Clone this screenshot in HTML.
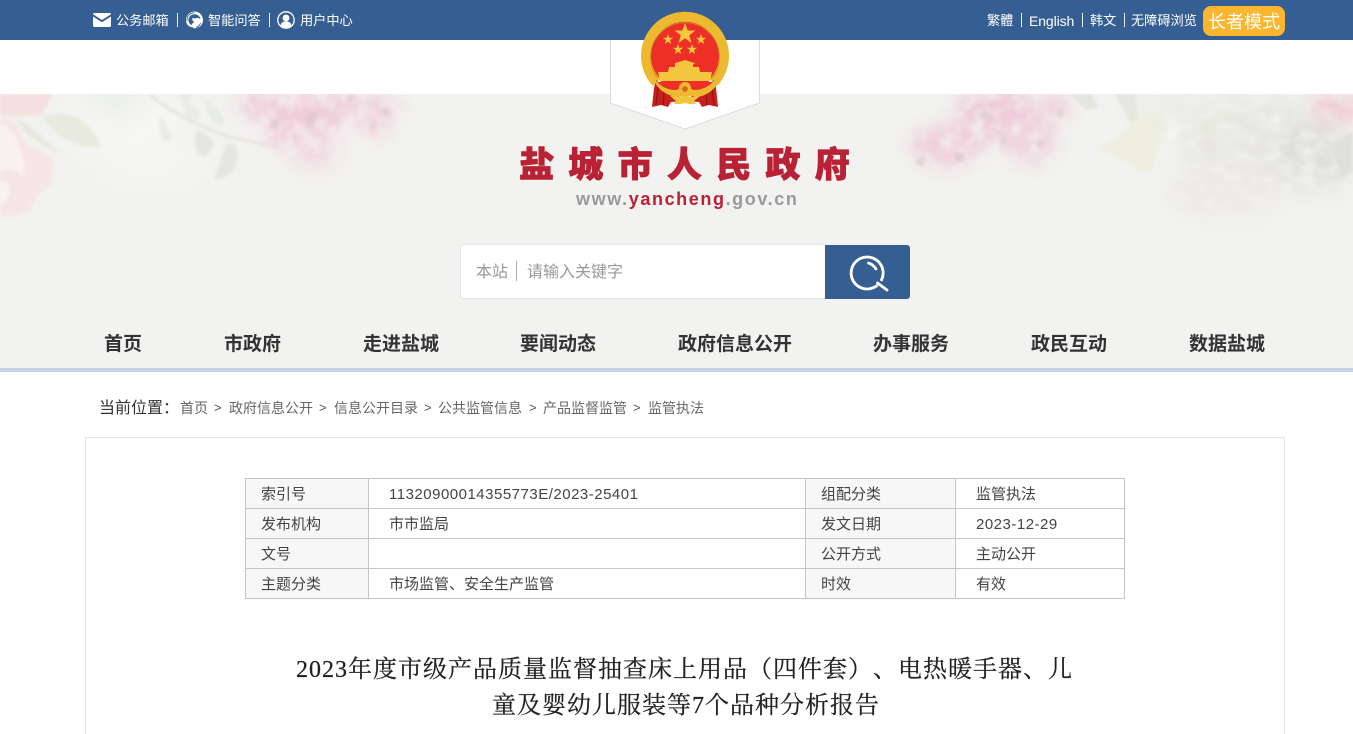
<!DOCTYPE html>
<html lang="zh-CN"><head><meta charset="utf-8"><title>盐城市人民政府</title>
<style>
*{margin:0;padding:0;box-sizing:border-box}
html,body{width:1353px;height:734px;overflow:hidden;background:#fff}
body{position:relative;font-family:"Liberation Sans","Noto Sans CJK SC",sans-serif;color:#333}
.a{position:absolute;white-space:nowrap}
.top{left:0;top:0;width:1353px;height:40px;background:#355f92}
.t{color:#fff;font-size:13.200px;line-height:20px;top:10.500px}
.sep{width:1px;height:14px;background:#e8edf3;top:13px}
.n{font-size:19px;font-weight:700;line-height:28px;top:331px;color:#333}
.c{font-size:14px;line-height:18px;top:399px;color:#666}
.g{font-size:13px;line-height:18px;top:399px;color:#555}
table{position:absolute;left:245px;top:478px;width:879px;height:121px;border-collapse:collapse;table-layout:fixed;font-size:15px;color:#444}
td{border:1px solid #c4c4c4;height:30px;line-height:27px;white-space:nowrap;padding:2px 0 0}
td.l{background:#f7f7f7;padding-left:15px}
td.v{padding-left:20px}
td.i{padding-left:20px;letter-spacing:.5px}
.ti{font-family:"Liberation Serif","Noto Serif CJK SC",serif;font-size:24px;line-height:36px;letter-spacing:1px;color:#222;left:296px;text-spacing-trim:space-all;-webkit-text-stroke:.25px #222}
</style></head><body>
<div class="a top"></div>

<!-- top left -->
<svg class="a" style="left:93px;top:13px" width="18" height="14" viewBox="0 0 18 14"><path fill="#fff" d="M1.500 0h15c.8 0 1.500.6 1.500 1.300L9 7 0 1.300C0 .6.7 0 1.500 0zM0 3.500 9 9.200l9-5.700V12.500c0 .8-.7 1.500-1.500 1.500h-15C.7 14 0 13.300 0 12.500z"/></svg>
<div class="a t" style="left:116px">公务邮箱</div>
<div class="a sep" style="left:177px"></div>
<svg class="a" style="left:185px;top:11px" width="19" height="19" viewBox="0 0 19 19"><path fill="#fff" d="M9.500.5C14 .5 18 4 18 9c0 3-1.500 5.500-3.800 7l-2.500.5c-.6 1.200-3.700 1.200-4-.2C3.500 16 1 13 1 9 1 4 5 .5 9.500.5z"/><path fill="#355f92" d="M3.500 10.500C3 6 6 3.300 9.500 3.300c3 0 5.300 1.900 6 4.700l-2.700-1.200c-2 .7-4 .7-5.500.2-.3 1.700.4 3.300 2 4.300-1.300.6-2.500 1.500-3 3-1.300-.9-2-2.300-2.800-3.800z"/><path fill="none" stroke="#355f92" stroke-width=".9" d="M2 10c-.3-5 3-8.300 7.500-8.300M15.500 12c-.6 2-2 3.500-4 4.200"/></svg>
<div class="a t" style="left:208px">智能问答</div>
<div class="a sep" style="left:269px"></div>
<svg class="a" style="left:277px;top:11px" width="18" height="18" viewBox="0 0 18 18"><circle cx="9" cy="9" r="8.200" fill="none" stroke="#fff" stroke-width="1.300"/><circle cx="9" cy="7" r="3.400" fill="#fff"/><path fill="#fff" d="M3.500 14.200c.6-2.600 2.800-3.800 5.500-3.800s4.900 1.200 5.500 3.800C13 15.700 11 16.500 9 16.500s-4-.8-5.500-2.300z"/></svg>
<div class="a t" style="left:300px">用户中心</div>

<!-- top right -->
<div class="a t" style="left:987px">繁體</div>
<div class="a sep" style="left:1021px"></div>
<div class="a t" style="left:1029px;font-size:14px;letter-spacing:-.1px">English</div>
<div class="a sep" style="left:1082px"></div>
<div class="a t" style="left:1090px">韩文</div>
<div class="a sep" style="left:1124px"></div>
<div class="a t" style="left:1131px">无障碍浏览</div>
<div class="a" style="left:1203px;top:6px;width:82px;height:30px;border-radius:8px;background:#fbb62f;color:#fff;font-size:18px;line-height:32px;text-align:center">长者模式</div>

<!-- banner -->
<div class="a" style="left:0;top:94px;width:1353px;height:274px;background:#f2f2f0;overflow:hidden">
<svg width="1353" height="160" viewBox="0 0 1353 160" style="position:absolute;left:0;top:0">
<defs>
<filter id="b1"><feGaussianBlur stdDeviation="1.600"/></filter>
<filter id="b3"><feGaussianBlur stdDeviation="13"/></filter>
<filter id="m" x="-20%" y="-20%" width="140%" height="140%">
<feGaussianBlur stdDeviation="8" result="s"/>
<feTurbulence type="fractalNoise" baseFrequency=".07" numOctaves="3" seed="5"/>
<feColorMatrix values="0 0 0 0 0 0 0 0 0 0 0 0 0 0 0 0 0 0 1.800 -.15"/>
<feComposite in="s" operator="in"/>
<feGaussianBlur stdDeviation="1.200"/>
</filter>
<filter id="g" x="-20%" y="-20%" width="140%" height="140%">
<feGaussianBlur stdDeviation="14" result="s"/>
<feTurbulence type="fractalNoise" baseFrequency=".06 .1" numOctaves="3" seed="9"/>
<feColorMatrix values="0 0 0 0 0 0 0 0 0 0 0 0 0 0 0 0 0 0 1.600 -.1"/>
<feComposite in="s" operator="in"/>
<feGaussianBlur stdDeviation="1"/>
</filter>
</defs>
<!-- left -->
<g filter="url(#b3)">
<ellipse cx="125" cy="30" rx="60" ry="35" fill="#f6f6f3"/>
<ellipse cx="115" cy="5" rx="25" ry="14" fill="#e8ede6"/>
<ellipse cx="150" cy="70" rx="50" ry="22" fill="#f5f5f2"/>
<ellipse cx="300" cy="20" rx="60" ry="30" fill="#f7f0f2"/>
</g>
<g filter="url(#b1)">
<path d="M0 0h52l-4 10-8 12-40 0z" fill="#f6e0df"/>
<path d="M0 24c8-2 18 4 20 16l8 12 16 6 10 10-4 24-12 8-8 16-14 6-16 0z" fill="#f6e5e4"/>
<path d="M0 30c6 0 14 8 18 18 4 10 8 26 6 34-8-6-14-8-24-6z" fill="#f9f2f0"/>
<path d="M0 88c10-2 12 8 8 16l-8 8z" fill="#f9f2f0"/>
<path d="M16 24c8 3 22 14 38 30l8 6c-12-4-26-12-32-18-6-4-10-10-14-18z" fill="#e6e8de"/>
<path d="M42 22c18-6 44-4 58 28l3 3c-16 2-36-4-46-14-6-4-10-10-15-17z" fill="#e8eadf"/>
<path d="M160 22c5 6 10 16 12 22l-6 4c-6-2-8-16-6-26zM180 0h12c0 4-4 8-8 12zM186 8c8 4 14 8 14 16-5 4-13 1-16-5zM204 4c8 6 18 14 21 22l-4 6c-8-2-16-14-17-28z" fill="#e7ebe4"/>
<path d="M196 36c6 0 16 8 18 14l-8 12c-6 0-10-2-11-10z" fill="#e2e6de"/>
<path d="M226 50c8-2 12 0 12 12 0 14-12 22-24 24 4-12 8-24 12-36z" fill="#e5e5e3"/>
<path d="M150 1c20 16 48 32 80 42l48 10" stroke="#dcd4cf" stroke-width="1.500" fill="none"/>
</g>
<g filter="url(#m)">
<ellipse cx="300" cy="28" rx="38" ry="30" fill="#efcbd9"/>
<ellipse cx="330" cy="14" rx="72" ry="15" fill="#efcdda"/>
<ellipse cx="258" cy="10" rx="22" ry="15" fill="#eecdda"/>
<ellipse cx="375" cy="28" rx="15" ry="18" fill="#f0d2dc"/>
<ellipse cx="315" cy="58" rx="26" ry="20" fill="#f2dbe2"/>
</g>
<g filter="url(#b1)" fill="#cfc2bd" opacity=".4"><circle cx="275" cy="30" r="4"/><circle cx="312" cy="24" r="6"/><circle cx="385" cy="18" r="4"/><circle cx="372" cy="32" r="3"/><circle cx="350" cy="5" r="3"/></g>
<!-- right -->
<g filter="url(#m)">
<ellipse cx="1000" cy="22" rx="48" ry="28" fill="#efcbd9"/>
<ellipse cx="945" cy="52" rx="38" ry="22" fill="#f0d0dc"/>
<ellipse cx="1030" cy="50" rx="28" ry="22" fill="#f0d4de"/>
<ellipse cx="1055" cy="15" rx="16" ry="18" fill="#f0d4de"/>
</g>
<g filter="url(#b1)" fill="#cfc2bd" opacity=".45"><circle cx="1003" cy="47" r="4"/><circle cx="1040" cy="50" r="4"/><circle cx="960" cy="63" r="5"/><circle cx="920" cy="68" r="4"/><circle cx="985" cy="22" r="5"/><circle cx="1060" cy="20" r="4"/></g>
<g filter="url(#b1)">
<path d="M1097 55c20-8 28-24 58-40l8 8c0 20-6 40-14 56l-12-4c-10-8-24-14-40-20z" fill="#eeefe1"/>
<path d="M1070 0h22l6 14-12 2zM1115 0h20l4 24-8 6z" fill="#e3e6de"/>
<circle cx="1172" cy="40" r="6" fill="#f9f9f5"/>
</g>
<g filter="url(#g)">
<ellipse cx="1250" cy="40" rx="75" ry="40" fill="#e6e6dd"/>
<ellipse cx="1225" cy="95" rx="58" ry="30" fill="#ebe8e5"/>
<ellipse cx="1315" cy="60" rx="40" ry="38" fill="#dededa"/>
<ellipse cx="1180" cy="10" rx="55" ry="16" fill="#ebece1"/>
</g>
<g filter="url(#m)">
<ellipse cx="1335" cy="14" rx="28" ry="18" fill="#f0ced4"/>
</g>
<g filter="url(#b1)"><path d="M1330 50l23-12v40l-12 6z" fill="#e0e0db"/></g>
</svg>
</div>
<div class="a" style="left:0;top:368px;width:1353px;height:4px;background:#c4d3e6"></div>

<!-- shield -->
<svg class="a" style="left:610px;top:40px" width="150" height="90" viewBox="0 0 150 90"><path d="M.5 0V63L75 89 149.500 63V0" fill="#fff" stroke="#dcdcdc"/></svg>

<!-- emblem -->
<svg class="a" style="left:638px;top:10px" width="94" height="100" viewBox="0 0 94 100">
<circle cx="47" cy="46" r="35" fill="#ee2f27"/>
<path d="M18.600 72.500A39 39 0 1 1 75.400 72.500" fill="none" stroke="#edb931" stroke-width="10"/>
<path d="M19.500 68A34.500 34.500 0 1 1 74.500 68" fill="none" stroke="#c29320" stroke-width=".8"/>
<!-- ribbons -->
<path d="M18 70l-2 8-2 19 9-2 7 2 3-5 11-1-6-8-12-4z" fill="#c8201c"/>
<path d="M76 70l2 8 2 19-9-2-7 2-3-5-11-1 6-8 12-4z" fill="#c8201c"/>
<path d="M20 77l-2 18M26 82l-1 13M74 77l2 18M68 82l1 13" stroke="#8e1513" stroke-width="1.200" fill="none"/>
<g fill="#f5c73f">
<polygon points="47,13 49.700,20.500 57.500,20.500 51.200,25.200 53.500,33 47,28.300 40.500,33 42.800,25.200 36.500,20.500 44.300,20.500"/>
<polygon points="30,24 31.300,27.800 35.200,27.800 32,30.100 33.200,34 30,31.700 26.800,34 28,30.100 24.800,27.800 28.700,27.800"/>
<polygon points="63,24 64.300,27.800 68.200,27.800 65,30.100 66.200,34 63,31.700 59.800,34 61,30.100 57.800,27.800 61.700,27.800"/>
<polygon points="40,34 41.300,37.800 45.200,37.800 42,40.100 43.200,44 40,41.700 36.800,44 38,40.100 34.800,37.800 38.700,37.800"/>
<polygon points="54,34 55.300,37.800 59.200,37.800 56,40.100 57.200,44 54,41.700 50.800,44 52,40.100 48.800,37.800 52.700,37.800"/>
<path d="M37 53l4-1 6-2 6 2 4 1-2 1.500v2.500h6l1 5H30l1-5h6v-2.500z"/>
<path d="M20 62h54l-2 9H22z"/>
</g>
<path d="M20 72H74l-3 6-14 5H37l-14-5z" fill="#ee2f27"/>
<path d="M14 64c4 10 14 16 23 16 3 0 5-2 10-6 5 4 7 6 10 6 9 0 19-6 23-16l3 2c-3 12-14 20-24 21l-5-1H44l-5 1c-10-1-23-9-25-23z" fill="#edb931"/>
<circle cx="47" cy="78" r="6" fill="#edb931"/><circle cx="47" cy="79" r="2.800" fill="#d9651f"/>
<path d="M32 86l9 1 3-1h6l3 1 9-1-6 5 2 3-7 0-4-1-4 1-7 0 2-3z" fill="#f1c63f"/>
</svg>

<!-- title -->
<div class="a" style="left:519px;top:139px;font-family:'Noto Sans CJK SC',sans-serif;font-weight:900;font-size:35px;line-height:48px;letter-spacing:14.300px;color:#b92135;-webkit-text-stroke:.8px #b92135">盐城市人民政府</div>
<div class="a" style="left:576px;top:187px;font-family:'Liberation Sans',sans-serif;font-weight:700;font-size:18px;line-height:24px;letter-spacing:1.600px;color:#999">www.<span style="color:#b92135">yancheng</span>.gov.cn</div>

<!-- search -->
<div class="a" style="left:460px;top:244px;width:366px;height:55px;background:#fff;border:1px solid #e6e6e6;border-right:0;border-radius:4px 0 0 4px"></div>
<div class="a" style="left:476px;top:261px;font-size:16px;line-height:24px;color:#999">本站</div>
<div class="a" style="left:516px;top:261px;width:1px;height:20px;background:#aaa"></div>
<div class="a" style="left:527px;top:261px;font-size:16px;line-height:24px;color:#999">请输入关键字</div>
<div class="a" style="left:825px;top:245px;width:85px;height:54px;background:#355f92;border-radius:0 3px 3px 0"></div>
<svg class="a" style="left:848px;top:253px" width="42" height="40" viewBox="0 0 42 40"><path d="M29.500 32.200A16 16 0 1 1 33 28" fill="none" stroke="#fff" stroke-width="2.800"/><path d="M29.500 30l9.500 7" stroke="#fff" stroke-width="2.800" stroke-linecap="round"/><path d="M20.500 10c3 .8 5.500 3 7.500 6" fill="none" stroke="#fff" stroke-width="2.800" stroke-linecap="round"/></svg>

<!-- nav -->
<div class="a n" style="left:104px">首页</div>
<div class="a n" style="left:224px">市政府</div>
<div class="a n" style="left:363px">走进盐城</div>
<div class="a n" style="left:520px">要闻动态</div>
<div class="a n" style="left:678px">政府信息公开</div>
<div class="a n" style="left:873px">办事服务</div>
<div class="a n" style="left:1031px">政民互动</div>
<div class="a n" style="left:1189px">数据盐城</div>

<!-- breadcrumb -->
<div class="a" style="left:99px;top:398px;font-size:16px;line-height:22px;color:#333">当前位置：</div>
<div class="a c" style="left:180px">首页</div><div class="a g" style="left:214px">&gt;</div>
<div class="a c" style="left:229px">政府信息公开</div><div class="a g" style="left:319px">&gt;</div>
<div class="a c" style="left:334px">信息公开目录</div><div class="a g" style="left:424px">&gt;</div>
<div class="a c" style="left:438px">公共监管信息</div><div class="a g" style="left:529px">&gt;</div>
<div class="a c" style="left:543px">产品监督监管</div><div class="a g" style="left:633px">&gt;</div>
<div class="a c" style="left:648px">监管执法</div>

<!-- content box -->
<div class="a" style="left:85px;top:437px;width:1200px;height:320px;border:1px solid #e6e6e6;background:#fff"></div>
<table>
<colgroup><col style="width:123px"><col style="width:437px"><col style="width:150px"><col style="width:169px"></colgroup>
<tr><td class="l">索引号</td><td class="i">11320900014355773E/2023-25401</td><td class="l">组配分类</td><td class="v">监管执法</td></tr>
<tr><td class="l">发布机构</td><td class="i" style="letter-spacing:0">市市监局</td><td class="l">发文日期</td><td class="i">2023-12-29</td></tr>
<tr><td class="l">文号</td><td class="i"></td><td class="l">公开方式</td><td class="v">主动公开</td></tr>
<tr><td class="l">主题分类</td><td class="i" style="letter-spacing:0">市场监管、安全生产监管</td><td class="l">时效</td><td class="v">有效</td></tr>
</table>

<div class="a ti" style="top:652px">2023年度市级产品质量监督抽查床上用品（四件套）、电热暖手器、儿</div>
<div class="a ti" style="top:688px;left:492px">童及婴幼儿服装等7个品种分析报告</div>
</body></html>
